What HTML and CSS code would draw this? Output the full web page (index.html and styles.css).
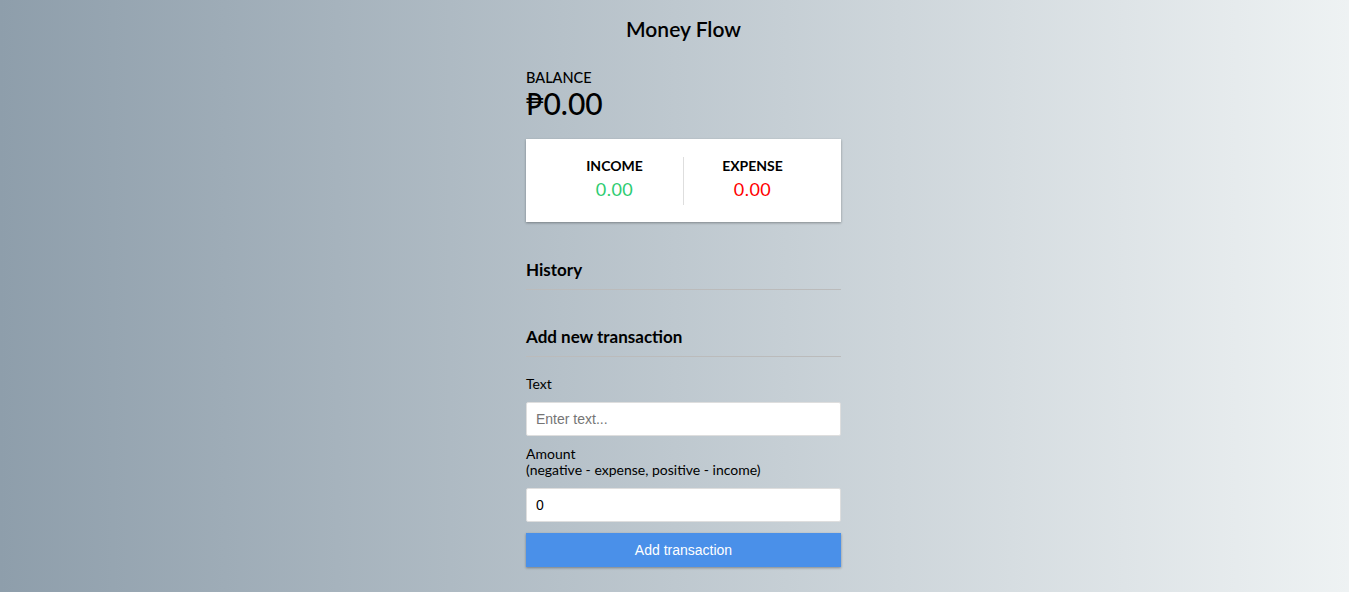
FILE: index.html
```
<!DOCTYPE html>
<html lang="en">
<head>
<meta charset="UTF-8">
<title>Money Flow</title>
<link rel="stylesheet" href="styles.css">
</head>
<body>
  <div class="container">
    <h1 class="title">Money Flow</h1>
    <h4 class="balance-label">Balance</h4>
    <div class="balance">₱0.00</div>

    <div class="inc-exp">
      <div class="col">
        <h4 class="col-label">Income</h4>
        <p class="money plus">0.00</p>
      </div>
      <div class="col">
        <h4 class="col-label">Expense</h4>
        <p class="money minus">0.00</p>
      </div>
    </div>

    <h3 class="section history">History</h3>
    <ul class="list"></ul>

    <h3 class="section add">Add new transaction</h3>
    <form class="form">
      <div class="field">
        <label class="label" for="text">Text</label>
        <input class="input" type="text" id="text" placeholder="Enter text...">
      </div>
      <div class="field">
        <label class="label" for="amount">Amount <br>(negative - expense, positive - income)</label>
        <input class="input" type="number" id="amount" value="0">
      </div>
      <button class="btn" type="button">Add transaction</button>
    </form>
  </div>
</body>
</html>
```
FILE: styles.css
```
* { box-sizing: border-box; }

body {
  margin: 0;
  min-height: 100vh;
  padding-left: 18px;
  background: linear-gradient(to right, #8e9eab, #eef2f3);
  font-family: Lato, "Noto Sans", sans-serif;
  color: #000;
}

.container {
  width: 315px;
  margin: 0 auto;
  padding-top: 16px;
}

.title {
  margin: 0;
  font-size: 21px;
  font-weight: 600;
  text-align: center;
  line-height: 26px;
}

.balance-label {
  margin: 27px 0 0;
  font-size: 14.5px;
  font-weight: 500;
  text-transform: uppercase;
  line-height: 18px;
}

.balance {
  margin-top: 1px;
  font-size: 30px;
  line-height: 30px;
  font-weight: 500;
}

.inc-exp {
  margin-top: 21px;
  background: #fff;
  box-shadow: 0 1px 3px rgba(0,0,0,0.12), 0 1px 2px rgba(0,0,0,0.24);
  padding: 18px 20px 17px;
  display: flex;
}

.col {
  flex: 1;
  text-align: center;
}

.col:first-child {
  border-right: 1px solid #dedede;
}

.col-label {
  margin: 0;
  font-size: 14px;
  font-weight: 700;
  text-transform: uppercase;
}

.money {
  margin: 4px 0 5px;
  font-size: 18px;
  letter-spacing: 0.5px;
}

.plus { color: #2ecc71; }
.minus { color: #ff0000; }

.section {
  font-size: 17px;
  font-weight: 700;
  border-bottom: 1px solid #bbb;
  padding-bottom: 9px;
  margin: 0;
}

.history { margin-top: 37px; }

.list {
  list-style: none;
  margin: 0;
  padding: 0;
}

.add { margin-top: 36px; margin-bottom: 9px; }

.form { margin: 0; }

.label {
  display: inline-block;
  margin: 10px 0;
  font-size: 14px;
  line-height: 16px;
}

.input {
  display: block;
  width: 100%;
  border: 1px solid #dedede;
  border-radius: 2px;
  padding: 8px 9px;
  font-family: Arial, "Liberation Sans", sans-serif;
  font-size: 14px;
  line-height: 16px;
  background: #fff;
  color: #000;
}

.input::placeholder { color: #757575; }

.btn {
  display: block;
  width: 100%;
  margin: 11px 0 30px;
  padding: 9px;
  border: 0;
  background: #4a90e9;
  color: #fff;
  font-family: Arial, "Liberation Sans", sans-serif;
  font-size: 14px;
  line-height: 16px;
  box-shadow: 0 1px 3px rgba(0,0,0,0.12), 0 1px 2px rgba(0,0,0,0.24);
  cursor: pointer;
}
```
